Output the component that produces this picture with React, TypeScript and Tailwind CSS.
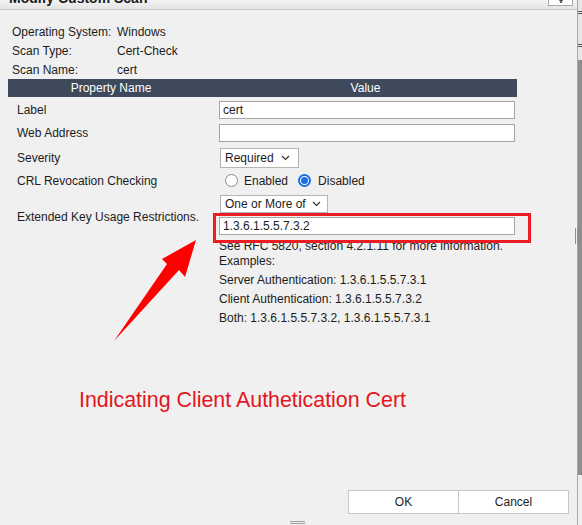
import React from 'react';

function Chevron() {
  return (
    <svg width="9" height="6" viewBox="0 0 9 6" className="shrink-0">
      <path d="M1 1 L4.5 4.5 L8 1" fill="none" stroke="#333" strokeWidth="1.2" />
    </svg>
  );
}

function Radio({ checked }: { checked?: boolean }) {
  if (checked) {
    return (
      <span className="w-[13px] h-[13px] rounded-full border-[2px] border-[#1a6fe0] bg-white flex items-center justify-center shrink-0">
        <span className="w-[7px] h-[7px] rounded-full bg-[#1a6fe0]" />
      </span>
    );
  }
  return <span className="w-[13px] h-[13px] rounded-full border border-[#8a8a8a] bg-white shrink-0" />;
}

export default function App() {
  const info = [
    { k: 'Operating System:', v: 'Windows' },
    { k: 'Scan Type:', v: 'Cert-Check' },
    { k: 'Scan Name:', v: 'cert' },
  ];

  return (
    <div className="relative flex w-[582px] h-[525px] overflow-hidden bg-[#f0f0f0] text-[12px] text-[#1c1c1c] font-['Liberation_Sans',Arial,sans-serif]">
      {/* dialog */}
      <div className="flex flex-col w-[578px] h-[525px] border-r border-[#a8a8a8] bg-[#f0f0f0]">
        {/* title bar, mostly scrolled off the top */}
        <div className="flex justify-between h-[10px] bg-gradient-to-b from-[#f4f4f4] to-[#e4e4e4] border-b border-[#c8c8c8] overflow-hidden">
          <span className="ml-[9px] mt-[-10px] text-[14px] leading-[16px] font-bold text-[#1a1a1a]">Modify Custom Scan</span>
          <div className="mr-[4px] w-[25px] h-[6px] bg-white border border-t-0 border-[#a9a9a9] flex justify-center overflow-hidden">
            <svg width="8" height="5" viewBox="0 0 8 5">
              <path d="M0 -3 L5 2.5 M8 -3 L3 2.5" stroke="#444" strokeWidth="1.3" fill="none" />
            </svg>
          </div>
        </div>

        {/* scan info */}
        <div className="flex flex-col pl-[12px] pt-[12px]">
          {info.map((r) => (
            <div key={r.k} className="flex h-[19px] items-center">
              <span className="w-[105px]">{r.k}</span>
              <span>{r.v}</span>
            </div>
          ))}
        </div>

        {/* property table */}
        <div className="ml-[8px] w-[509px] flex flex-col">
          <div className="flex h-[18px] items-center bg-[#3e4a5c] text-white">
            <div className="w-[206px] text-center">Property Name</div>
            <div className="flex-1 text-center">Value</div>
          </div>

          <div className="flex h-[23px] items-center pt-[3px]">
            <div className="w-[211px] pl-[9px]">Label</div>
            <div className="w-[296px] h-[18px] bg-white border border-[#a5a5a5] flex items-center pl-[3px]">cert</div>
          </div>

          <div className="flex h-[23px] items-center pt-[3px]">
            <div className="w-[211px] pl-[9px]">Web Address</div>
            <div className="w-[296px] h-[18px] bg-white border border-[#a5a5a5]" />
          </div>

          <div className="flex h-[26px] items-center pt-[3px]">
            <div className="w-[212px] pl-[9px]">Severity</div>
            <div className="w-[79px] h-[20px] bg-white border border-[#b4b4b4] flex items-center justify-between pl-[4px] pr-[8px]">
              <span>Required</span>
              <Chevron />
            </div>
          </div>

          <div className="flex h-[23px] items-center">
            <div className="w-[211px] pl-[9px]">CRL Revocation Checking</div>
            <div className="flex items-center ml-[6px]">
              <Radio />
              <span className="ml-[6px]">Enabled</span>
              <span className="ml-[10px]"><Radio checked /></span>
              <span className="ml-[7px]">Disabled</span>
            </div>
          </div>

          <div className="flex">
            <div className="w-[211px] pl-[9px] pt-[18px] leading-[14px]">Extended Key Usage Restrictions.</div>
            <div className="flex flex-col pt-[3px]">
              <div className="ml-[1px] w-[108px] h-[18px] bg-white border border-[#b4b4b4] flex items-center justify-between pl-[4px] pr-[6px]">
                <span>One or More of</span>
                <Chevron />
              </div>
              <div className="relative mt-[4px] w-[296px] h-[18px] bg-white border border-[#a5a5a5] flex items-center pl-[3px]">
                1.3.6.1.5.5.7.3.2
                <div className="absolute left-[-7px] top-[-5px] w-[318px] h-[30px] border-[3px] border-[#ec1c24] z-10" />
              </div>
              <div className="mt-[4px] leading-[15px]">
                <div>See RFC 5820, section 4.2.1.11 for more information.</div>
                <div>Examples:</div>
              </div>
              <div className="mt-[2px] leading-[19px]">
                <div>Server Authentication: 1.3.6.1.5.5.7.3.1</div>
                <div>Client Authentication: 1.3.6.1.5.5.7.3.2</div>
                <div>Both: 1.3.6.1.5.5.7.3.2, 1.3.6.1.5.5.7.3.1</div>
              </div>
            </div>
          </div>
        </div>

        {/* annotation caption */}
        <div className="ml-[79px] mt-[60px] text-[21.4px] leading-[24px] text-[#e3161e]">
          Indicating Client Authetication Cert
        </div>

        {/* buttons */}
        <div className="mt-auto mb-[7px] mr-[8px] flex justify-end">
          <button className="w-[111px] h-[24px] bg-white border border-[#c6c6c6] text-[#1c1c1c]">OK</button>
          <button className="w-[110px] h-[24px] bg-white border border-l-0 border-[#c6c6c6] text-[#1c1c1c]">Cancel</button>
        </div>

        {/* bottom grip */}
        <div className="flex justify-center pb-[1px]">
          <div className="ml-[18px] w-[15px] h-[3px] border-y border-[#a0a0a0]" />
        </div>
      </div>

      {/* page edge behind the dialog */}
      <div className="flex flex-col w-[4px]">
        <div className="h-[60px] bg-[#e6e6e6] flex flex-col gap-[30px] pt-[11px]">
          <div className="h-[3px] border-y border-[#555]" />
          <div className="h-[3px] border-y border-[#555]" />
        </div>
        <div className="flex-1 bg-[#8e8e8e]" />
        <div className="h-[50px] bg-[#efefef]" />
      </div>

      {/* side resize handle */}
      <div className="absolute left-[575px] top-[228px] w-[3px] h-[16px] border-x border-[#909090]" />

      {/* red arrow annotation */}
      <svg className="absolute left-0 top-0 pointer-events-none" width="582" height="525" viewBox="0 0 582 525">
        <polygon points="196,240 185,277 179,270 114,341 167,264 162,259" fill="#ff0000" />
      </svg>
    </div>
  );
}
